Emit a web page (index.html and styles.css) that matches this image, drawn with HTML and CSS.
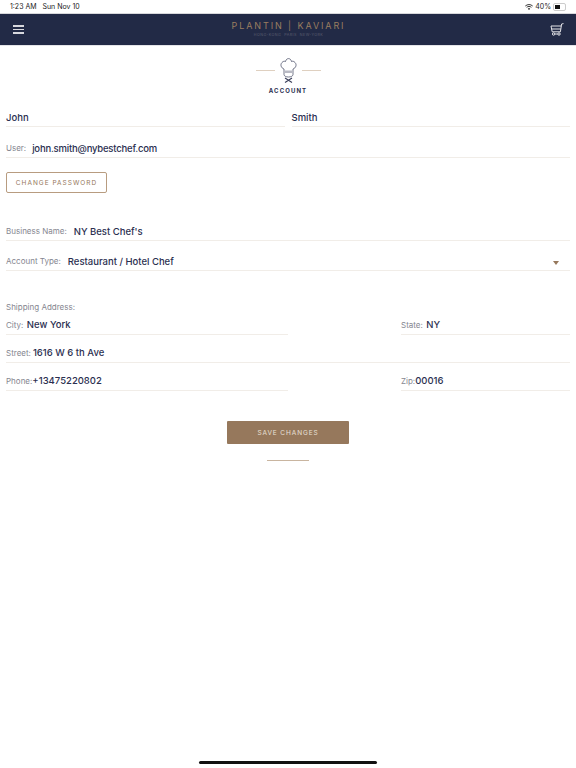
FILE: index.html
```html
<!DOCTYPE html>
<html lang="en">
<head>
    <meta charset="UTF-8">
    <title>Account</title>
    <link rel="stylesheet" href="styles.css">
</head>
<body>
    <div class="status_bar">
        <span>1:23 AM&nbsp;&nbsp; Sun Nov 10</span>
        <span class="status_right">
            <svg width="8" height="6" viewBox="0 0 8 6" fill="none" stroke="#222" stroke-width=".9">
                <path d="M.3 2 C2.4 .1 5.6 .1 7.7 2"/>
                <path d="M1.6 3.3 C3 2.2 5 2.2 6.4 3.3"/>
                <path d="M4 6 L2.8 4.7 C3.5 4.2 4.5 4.2 5.2 4.7 Z" fill="#222" stroke="none"/>
            </svg>
            <span>40%</span>
            <span class="battery"><span class="battery_fill"></span></span>
        </span>
    </div>
    <header class="top_bar">
        <button class="menu_btn" aria-label="menu"><span></span><span></span><span></span></button>
        <div class="logo">
            <div class="logo_name">PLANTIN | KAVIARI</div>
            <div class="logo_cities">HONG-KONG &nbsp;PARIS &nbsp;NEW-YORK</div>
        </div>
        <svg class="cart" width="14" height="13" viewBox="0 0 14 13" fill="none" stroke="#e4e4e8" stroke-width="1">
            <path d="M13.5 .6 L11.6 1 L10.4 8.8 H2.2 L1 3 H11.3"/>
            <path d="M1.6 6 H10.8"/>
            <circle cx="3.6" cy="11" r="1.2"/>
            <circle cx="9" cy="11" r="1.2"/>
            <path d="M4.8 11 H7.8"/>
        </svg>
    </header>
    <main>
        <div class="page_title">
            <div class="title_icon">
                <span class="rule"></span>
                <svg width="17" height="25" viewBox="0 0 17 25" fill="none" stroke="#3a3f5a" stroke-width=".7">
                    <path d="M4 11 C1 10 0 6.5 2 4.5 C3 3.2 4.5 3 5.5 3.5 C6 1.2 7.5 .6 8.5 .6 C9.5 .6 11 1.2 11.5 3.5 C12.5 3 14 3.2 15 4.5 C17 6.5 16 10 13 11 V16.5 C13 18 11 19 8.5 19 C6 19 4 18 4 16.5 Z"/>
                    <path d="M4 12.5 H13 V15 H4 Z" fill="#b9bac4" stroke="none"/>
                    <path d="M5 20 L12 24.5 M12 20 L5 24.5" stroke-width="1.1"/>
                </svg>
                <span class="rule"></span>
            </div>
            <div class="title_text">ACCOUNT</div>
        </div>

        <div class="row name_row">
            <div class="field low"><span class="val">John</span></div>
            <div class="field low"><span class="val">Smith</span></div>
        </div>
        <div class="field low user_field"><span class="lbl">User:</span><span class="val">john.smith@nybestchef.com</span></div>

        <button class="btn_outline">CHANGE PASSWORD</button>

        <div class="field low business_field"><span class="lbl">Business Name:</span><span class="val">NY Best Chef's</span></div>
        <div class="field low type_field">
            <span class="lbl">Account Type:</span><span class="val">Restaurant / Hotel Chef</span>
            <span class="arrow"></span>
        </div>

        <div class="shipping_label">Shipping Address:</div>
        <div class="row addr_row city_row">
            <div class="field wide tight"><span class="lbl">City:</span><span class="val">New York</span></div>
            <div class="field narrow tight"><span class="lbl">State:</span><span class="val">NY</span></div>
        </div>
        <div class="field street_field tight"><span class="lbl">Street:</span><span class="val">1616 W 6 th Ave</span></div>
        <div class="row addr_row phone_row">
            <div class="field wide tight"><span class="lbl">Phone:</span><span class="val">+13475220802</span></div>
            <div class="field narrow tight"><span class="lbl">Zip:</span><span class="val">00016</span></div>
        </div>

        <button class="btn_save">SAVE CHANGES</button>
        <div class="end_rule"></div>
    </main>
    <div class="home_bar"></div>
</body>
</html>
```

FILE: styles.css
```css
/* Reset some default styles */
html, body {
    margin: 0;
    padding: 0;
}
body {
    width: 576px;
    height: 768px;
    overflow: hidden;
    position: relative;
    background-color: #ffffff;
    font-family: Inter, "Liberation Sans", sans-serif;
    color: #2b2f50;
}
.status_bar {
    height: 13px;
    padding: 0 10px;
    display: flex;
    justify-content: space-between;
    align-items: center;
    font-size: 7px;
    color: #222222;
}
.status_right {
    display: flex;
    align-items: center;
    gap: 2px;
}
.battery {
    width: 9px;
    height: 4px;
    padding: 1px;
    border: 1px solid #cccccc;
    border-radius: 2px;
    display: flex;
}
.battery_fill {
    width: 5px;
    background-color: #111111;
}
.top_bar {
    height: 31px;
    padding: 0 12px 0 13px;
    display: grid;
    grid-template-columns: 1fr auto 1fr;
    align-items: center;
    background-color: #222a46;
    border-top: 1px solid #d8d8dc;
    border-bottom: 1px solid #e4e4e8;
}
.cart {
    justify-self: end;
}
.menu_btn {
    width: 11px;
    padding: 0;
    border: none;
    background: none;
    display: flex;
    flex-direction: column;
    gap: 2px;
}
.menu_btn span {
    height: 1.5px;
    background-color: #d8d8de;
}
.logo {
    text-align: center;
}
.logo_name {
    font-size: 9px;
    letter-spacing: 1.9px;
    line-height: 11px;
    color: #9a7d60;
}
.logo_cities {
    font-size: 3.7px;
    letter-spacing: .45px;
    line-height: 8px;
    color: #5c5f70;
}
main {
    padding: 0 6px;
}
.page_title {
    padding-top: 12px;
    display: flex;
    flex-direction: column;
    align-items: center;
}
.title_icon {
    display: flex;
    align-items: center;
    gap: 5px;
}
.rule {
    width: 19px;
    height: 1px;
    background-color: #dfd0c0;
}
.title_text {
    margin-top: 3px;
    font-size: 6px;
    font-weight: 700;
    letter-spacing: 1.1px;
    line-height: 9px;
}
.row {
    display: flex;
}
.field {
    height: 19px;
    display: flex;
    align-items: center;
    border-bottom: 1px solid #f1ede8;
    font-size: 9.5px;
}
.field.low {
    height: 18px;
    padding-top: 1px;
}
.val {
    font-weight: 500;
    color: #2b2f50;
}
.lbl {
    color: #85868f;
    font-size: 8px;
    margin-right: 7px;
}
.tight .lbl {
    margin-right: 2px;
}
.city_row .lbl {
    margin-right: 3.5px;
}
.phone_row .lbl {
    margin-right: 0;
}
.name_row {
    margin-top: 12px;
    gap: 7px;
}
.name_row .field {
    flex: 1;
}
.user_field {
    margin-top: 11px;
}
.user_field .lbl {
    margin-right: 6px;
}
.user_field .val {
    letter-spacing: -.2px;
}
.btn_outline {
    display: block;
    width: 101px;
    height: 21px;
    margin-top: 14px;
    padding: 0;
    background-color: #ffffff;
    border: 1px solid #b89c80;
    border-radius: 2px;
    color: #96785c;
    font-family: inherit;
    font-size: 6.5px;
    letter-spacing: 1px;
}
.business_field {
    margin-top: 28px;
}
.type_field {
    margin-top: 10px;
    position: relative;
}
.arrow {
    position: absolute;
    right: 11px;
    top: 10px;
    border-left: 3.5px solid transparent;
    border-right: 3.5px solid transparent;
    border-top: 4px solid #96785c;
}
.shipping_label {
    margin-top: 31px;
    font-size: 8px;
    line-height: 10px;
    color: #85868f;
}
.addr_row {
    justify-content: space-between;
}
.city_row {
    margin-top: 3px;
}
.wide {
    width: 282px;
}
.narrow {
    width: 169px;
}
.street_field {
    margin-top: 8px;
}
.phone_row {
    margin-top: 8px;
}
.btn_save {
    display: block;
    width: 122px;
    height: 23px;
    margin: 30px auto 0;
    padding: 0;
    border: none;
    border-radius: 1px;
    background-color: #96785c;
    color: #e8e0d8;
    font-family: inherit;
    font-size: 6.5px;
    letter-spacing: .9px;
}
.end_rule {
    width: 42px;
    height: 1px;
    margin: 16px auto 0;
    background-color: #c9b5a0;
}
.home_bar {
    position: absolute;
    left: 199px;
    bottom: 4px;
    width: 178px;
    height: 3px;
    border-radius: 2px;
    background-color: #111111;
}
```
